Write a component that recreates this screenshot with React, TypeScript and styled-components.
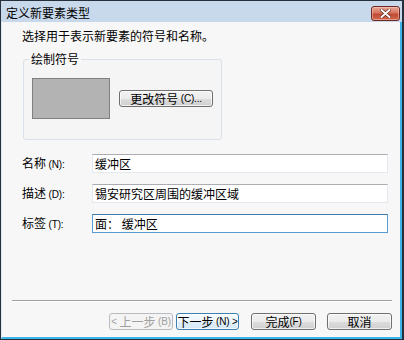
import React from "react";
import styled, { createGlobalStyle } from "styled-components";

const Global = createGlobalStyle`
  html, body { margin: 0; padding: 0; background: #ffffff; }
  * { box-sizing: border-box; }
  body { font-family: "Noto Sans CJK SC", "Noto Sans", sans-serif; font-size: 12px; color: #000; }
`;

const Window = styled.div`
  width: 404px;
  height: 340px;
  border: 1px solid #25303c;
  border-right-width: 2px;
  display: flex;
  flex-direction: column;
  background: linear-gradient(#c9d9ec, #b9cde4);
`;

const TitleBar = styled.div`
  height: 21px;
  flex: none;
  display: flex;
  align-items: center;
  justify-content: space-between;
  padding: 0 2px 0 5px;
`;

const Title = styled.span`
  font-size: 12px;
  line-height: 14px;
  color: #000;
  margin-top: 2px;
`;

const CloseBtn = styled.div`
  width: 29px;
  height: 15px;
  margin-top: 3px;
  border: 1px solid #6e2a22;
  border-radius: 3px;
  background: linear-gradient(#e8a694 0%, #d7755f 45%, #c04a33 55%, #d06a4f 100%);
  display: flex;
  align-items: center;
  justify-content: center;
  box-shadow: inset 0 0 0 1px rgba(255, 220, 210, 0.45);
`;

const Frame = styled.div`
  flex: 1;
  display: flex;
  border-left: 1px solid #dfe9f4;
  border-right: 2px solid #3db5e8;
  border-bottom: 2px solid #3db5e8;
`;

const Client = styled.div`
  flex: 1;
  background: #f7f7f7;
  display: flex;
  flex-direction: column;
`;

const Content = styled.div`
  padding: 7px 0 0 20px;
  display: flex;
  flex-direction: column;
`;

const Intro = styled.div`
  line-height: 14px;
  height: 14px;
`;

const Group = styled.div`
  position: relative;
  margin: 16px 0 0 1px;
  width: 199px;
  height: 81px;
  border: 1px solid #dbe1e8;
  border-radius: 3px;
  background: #f5f5f5;
  padding: 18px 0 0 8px;
  display: flex;
  align-items: flex-start;
`;

const Legend = styled.span`
  position: absolute;
  top: -8px;
  left: 5px;
  padding: 0 2px;
  line-height: 14px;
  background: #f7f7f7;
`;

const SymbolRow = styled.div`
  display: flex;
  align-items: center;
  gap: 9px;
`;

const Preview = styled.div`
  width: 78px;
  height: 41px;
  background: #b3b3b3;
  border: 1px solid #808080;
`;

const Latin = styled.span`
  font-family: "Liberation Sans", sans-serif;
  font-size: 10px;
  letter-spacing: -0.2px;
`;

const Button = styled.button<{ $w?: number; $focus?: boolean }>`
  width: ${(p) => p.$w ?? 65}px;
  height: 17px;
  padding: 0;
  overflow: visible;
  font-family: inherit;
  font-size: 12px;
  line-height: 14px;
  color: ${(p) => (p.disabled ? "#a0a0a0" : "#000")};
  border: 1px solid ${(p) => (p.disabled ? "#b8bcc0" : p.$focus ? "#3c7fb1" : "#707070")};
  border-radius: 3px;
  background: ${(p) =>
    p.disabled
      ? "#f4f4f4"
      : p.$focus
      ? "linear-gradient(#f6fbfe 0%, #eef6fc 50%, #e0eef9 51%, #d6e8f6 100%)"
      : "linear-gradient(#f2f2f2 0%, #ebebeb 50%, #dddddd 51%, #cfcfcf 100%)"};
  box-shadow: ${(p) => (p.disabled ? "none" : "inset 0 0 0 1px rgba(255,255,255,0.7)")};
  display: flex;
  align-items: center;
  justify-content: center;
  white-space: pre;
`;

const Rows = styled.div`
  margin-top: 14px;
  display: flex;
  flex-direction: column;
  gap: 11px;
`;

const Row = styled.div`
  display: flex;
  align-items: center;
`;

const Label = styled.span`
  width: 70px;
  line-height: 14px;
  white-space: pre;
`;

const Field = styled.input<{ $focus?: boolean }>`
  width: 296px;
  height: 19px;
  padding: 0 2px;
  font-family: inherit;
  font-size: 12px;
  color: #000;
  background: #fff;
  border: 1px solid ${(p) => (p.$focus ? "#5b9bd5" : "#e3e9ef")};
  border-top-color: ${(p) => (p.$focus ? "#3d7bad" : "#abadb3")};
  outline: none;
`;

const Footer = styled.div`
  margin-top: auto;
  padding: 0 8px 7px 10px;
  display: flex;
  flex-direction: column;
`;

const Separator = styled.div`
  height: 2px;
  border-top: 1px solid #a0a0a0;
  border-bottom: 1px solid #ffffff;
`;

const ButtonBar = styled.div`
  margin-top: 11px;
  display: flex;
  justify-content: flex-end;
`;

const Spacer = styled.div<{ $w: number }>`
  width: ${(p) => p.$w}px;
`;

export default function App() {
  return (
    <>
      <Global />
      <Window>
        <TitleBar>
          <Title>定义新要素类型</Title>
          <CloseBtn>
            <svg width="11" height="9" viewBox="0 0 11 9">
              <path d="M1.5 1 L9.5 8 M9.5 1 L1.5 8" stroke="#5a1d15" strokeWidth="3.2" strokeLinecap="round" />
              <path d="M1.5 1 L9.5 8 M9.5 1 L1.5 8" stroke="#ffffff" strokeWidth="2" strokeLinecap="round" />
            </svg>
          </CloseBtn>
        </TitleBar>
        <Frame>
          <Client>
            <Content>
              <Intro>选择用于表示新要素的符号和名称。</Intro>
              <Group>
                <Legend>绘制符号</Legend>
                <SymbolRow>
                  <Preview />
                  <Button $w={94}>
                    更改符号<Latin> (C)...</Latin>
                  </Button>
                </SymbolRow>
              </Group>
              <Rows>
                <Row>
                  <Label>
                    名称<Latin> (N):</Latin>
                  </Label>
                  <Field readOnly value="缓冲区" />
                </Row>
                <Row>
                  <Label>
                    描述<Latin> (D):</Latin>
                  </Label>
                  <Field readOnly value="锡安研究区周围的缓冲区域" />
                </Row>
                <Row>
                  <Label>
                    标签<Latin> (T):</Latin>
                  </Label>
                  <Field $focus readOnly value="面： 缓冲区" />
                </Row>
              </Rows>
            </Content>
            <Footer>
              <Separator />
              <ButtonBar>
                <Button disabled $w={64}>
                  <Latin>&lt; </Latin>上一步<Latin> (B)</Latin>
                </Button>
                <Spacer $w={3} />
                <Button $focus $w={63}>
                  下一步<Latin> (N) &gt;</Latin>
                </Button>
                <Spacer $w={12} />
                <Button>
                  完成<Latin>(F)</Latin>
                </Button>
                <Spacer $w={11} />
                <Button>取消</Button>
              </ButtonBar>
            </Footer>
          </Client>
        </Frame>
      </Window>
    </>
  );
}
